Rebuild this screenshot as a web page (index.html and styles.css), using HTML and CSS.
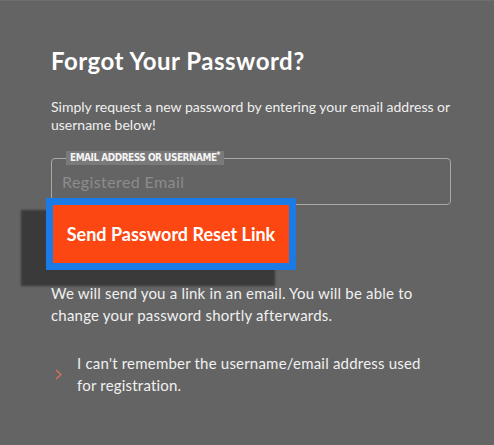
FILE: index.html
```html
<!DOCTYPE html>
<html>
<head>
<meta charset="utf-8">
<link rel="stylesheet" href="styles.css">
</head>
<body>
<main class="panel">
  <h1 class="title">Forgot Your Password?</h1>
  <p class="intro">Simply request a new password by entering your email address or username below!</p>
  <form class="form">
    <fieldset class="field">
      <legend class="field-label">EMAIL ADDRESS OR USERNAME<sup>*</sup></legend>
      <input class="field-input" type="text" placeholder="Registered Email">
    </fieldset>
    <button class="btn" type="button">Send Password Reset Link</button>
  </form>
  <p class="note">We will send you a link in an email. You will be able to change your password shortly afterwards.</p>
  <a class="help" href="#">
    <svg class="chev" width="7" height="11" viewBox="0 0 7 11"><path d="M1 1 L6 5.5 L1 10" fill="none" stroke="#e0735a" stroke-width="1.2"/></svg>
    <span class="help-text">I can't remember the username/email address used for registration.</span>
  </a>
</main>
</body>
</html>
```
FILE: styles.css
```css
html, body {
  margin: 0;
  padding: 0;
  background: #646464;
}
body {
  border-top: 1px solid #6e6e6e;
  height: 444px;
  overflow: hidden;
  font-family: "Lato", "Open Sans", sans-serif;
  color: #f2f2f2;
}
.panel {
  width: 400px;
  padding: 45px 0 0 51px;
}
.title {
  margin: 0;
  font-size: 24px;
  line-height: 30px;
  font-weight: 700;
  color: #fff;
  letter-spacing: 0.5px;
}
.intro {
  margin: 22px 0 0;
  font-size: 14px;
  line-height: 18px;
  color: #efefef;
}
.form {
  margin-top: 17px;
}
.field {
  margin: 0;
  padding: 0 10px;
  border: 1px solid #a8a8a8;
  border-radius: 4px;
  height: 54px;
  box-sizing: border-box;
}
.field-label {
  margin-left: 4px;
  padding: 1px 4px 1px;
  background: #7a7a7a;
  font-family: "DejaVu Sans Condensed", "DejaVu Sans", sans-serif;
  font-stretch: condensed;
  font-size: 10px;
  font-weight: 700;
  line-height: 12px;
  letter-spacing: -0.5px;
  color: #f4f4f4;
}
.field-label sup {
  font-size: 8px;
  vertical-align: top;
  line-height: 8px;
}
.field-input {
  display: block;
  width: 100%;
  margin-top: 7px;
  padding: 0;
  border: 0;
  background: transparent;
  font-family: "Lato", sans-serif;
  font-size: 16px;
  letter-spacing: 0.4px;
  line-height: 20px;
  color: #fff;
  outline: none;
}
.field-input::placeholder {
  color: #8c8c8c;
}
.btn {
  display: block;
  margin: 0 0 0 2px;
  width: 236px;
  height: 58px;
  border: 0;
  border-radius: 0;
  background: #fc4712;
  color: #fff;
  font-family: "Lato", sans-serif;
  font-size: 18px;
  font-weight: 700;
  outline: 7px solid #1a7be6;
  box-shadow: -23px 14px 2px 9px #3a3a3a;
  cursor: pointer;
}
.note {
  margin: 19px 0 0;
  font-size: 15px;
  line-height: 22px;
  letter-spacing: 0.2px;
  color: #f0f0f0;
}
.help {
  display: flex;
  align-items: center;
  gap: 15px;
  margin-top: 26px;
  padding-left: 4px;
  font-size: 15px;
  line-height: 22px;
  letter-spacing: 0.2px;
  color: #f0f0f0;
  text-decoration: none;
}
.help-text {
  max-width: 365px;
}
.chev {
  flex: none;
}
```
